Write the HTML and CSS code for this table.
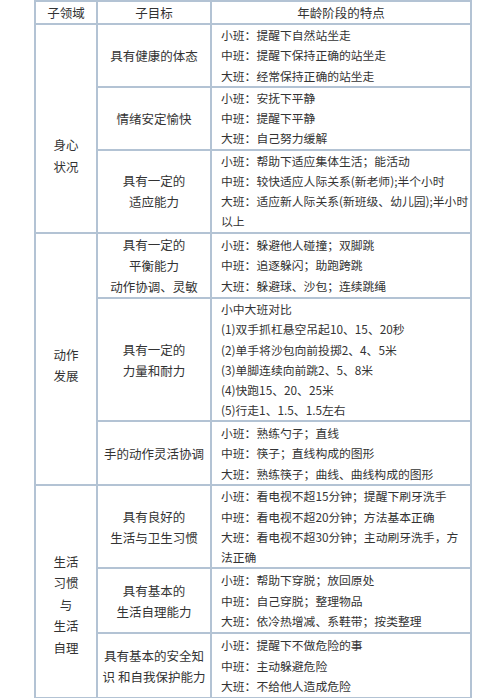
FILE: index.html
```html
<!DOCTYPE html>
<html lang="zh-CN">
<head>
<meta charset="utf-8">
<link rel="stylesheet" href="styles.css">
</head>
<body>
<table class="grid">
  <colgroup><col class="c1"><col class="c2"><col class="c3"></colgroup>
  <tr class="head"><th>子领域</th><th>子目标</th><th>年龄阶段的特点</th></tr>
  <tr class="h64">
    <td rowspan="3" class="domain d1">身心<br>状况</td>
    <td class="goal">具有健康的体态</td>
    <td class="feat">小班：提醒下自然站坐走<br>中班：提醒下保持正确的站坐走<br>大班：经常保持正确的站坐走</td>
  </tr>
  <tr class="h61">
    <td class="goal">情绪安定愉快</td>
    <td class="feat">小班：安抚下平静<br>中班：提醒下平静<br>大班：自己努力缓解</td>
  </tr>
  <tr class="h84">
    <td class="goal">具有一定的<br>适应能力</td>
    <td class="feat">小班：帮助下适应集体生活；能活动<br>中班：较快适应人际关系(新老师);半个小时<br>大班：适应新人际关系(新班级、幼儿园);半小时以上</td>
  </tr>
  <tr class="h66a">
    <td rowspan="3" class="domain d2">动作<br>发展</td>
    <td class="goal">具有一定的<br>平衡能力<br>动作协调、灵敏</td>
    <td class="feat">小班：躲避他人碰撞；双脚跳<br>中班：追逐躲闪；助跑跨跳<br>大班：躲避球、沙包；连续跳绳</td>
  </tr>
  <tr class="h123">
    <td class="goal">具有一定的<br>力量和耐力</td>
    <td class="feat">小中大班对比<br>(1)双手抓杠悬空吊起10、15、20秒<br>(2)单手将沙包向前投掷2、4、5米<br>(3)单脚连续向前跳2、5、8米<br>(4)快跑15、20、25米<br>(5)行走1、1.5、1.5左右</td>
  </tr>
  <tr class="h63">
    <td class="goal">手的动作灵活协调</td>
    <td class="feat">小班：熟练勺子；直线<br>中班：筷子；直线构成的图形<br>大班：熟练筷子；曲线、曲线构成的图形</td>
  </tr>
  <tr class="h83">
    <td rowspan="3" class="domain d3">生活<br>习惯<br>与<br>生活<br>自理</td>
    <td class="goal">具有良好的<br>生活与卫生习惯</td>
    <td class="feat">小班：看电视不超15分钟；提醒下刷牙洗手<br>中班：看电视不超20分钟；方法基本正确<br>大班：看电视不超30分钟；主动刷牙洗手，方法正确</td>
  </tr>
  <tr class="h66">
    <td class="goal">具有基本的<br>生活自理能力</td>
    <td class="feat">小班：帮助下穿脱；放回原处<br>中班：自己穿脱；整理物品<br>大班：依冷热增减、系鞋带；按类整理</td>
  </tr>
  <tr class="h66">
    <td class="goal">具有基本的安全知<br>识 和自我保护能力</td>
    <td class="feat">小班：提醒下不做危险的事<br>中班：主动躲避危险<br>大班：不给他人造成危险</td>
  </tr>
</table>
</body>
</html>
```

FILE: styles.css
```css
html, body {
  margin: 0;
  padding: 0;
  background: #ffffff;
  overflow: hidden;
}
body {
  width: 500px;
  height: 698px;
  font-family: "Noto Sans CJK SC", "Noto Sans", sans-serif;
  color: #333333;
}
.grid {
  margin-left: 34px;
  margin-top: 0;
  border-collapse: collapse;
  table-layout: fixed;
  width: 436px;
}
.c1 { width: 62px; }
.c2 { width: 114px; }
.c3 { width: 260px; }
.grid th, .grid td {
  border: 2px solid #b3c3d4;
  padding: 0;
}
.head { height: 23px; }
.head th {
  font-weight: normal;
  font-size: 12.5px;
  line-height: 20px;
  text-align: center;
}
.domain {
  text-align: center;
  vertical-align: middle;
  font-size: 12.5px;
  line-height: 21.5px;
}
.grid td.d1 { padding-top: 55px; }
.grid td.d2 { padding-top: 12px; }
.grid td.d3 { padding-top: 25px; }
.goal {
  text-align: center;
  vertical-align: middle;
  font-size: 12.5px;
  line-height: 21.2px;
}
.feat {
  font-size: 11.8px;
  line-height: 20.2px;
  vertical-align: middle;
}
.grid td.feat { padding: 0 1px 0 9px; }
.h61 { height: 60px; }
.h63 { height: 64px; }
.h64 { height: 63px; }
.h66 { height: 65px; }
.h66a { height: 64px; }
.h83 { height: 82px; }
.h84 { height: 83px; }
.h123 { height: 121px; }
```
